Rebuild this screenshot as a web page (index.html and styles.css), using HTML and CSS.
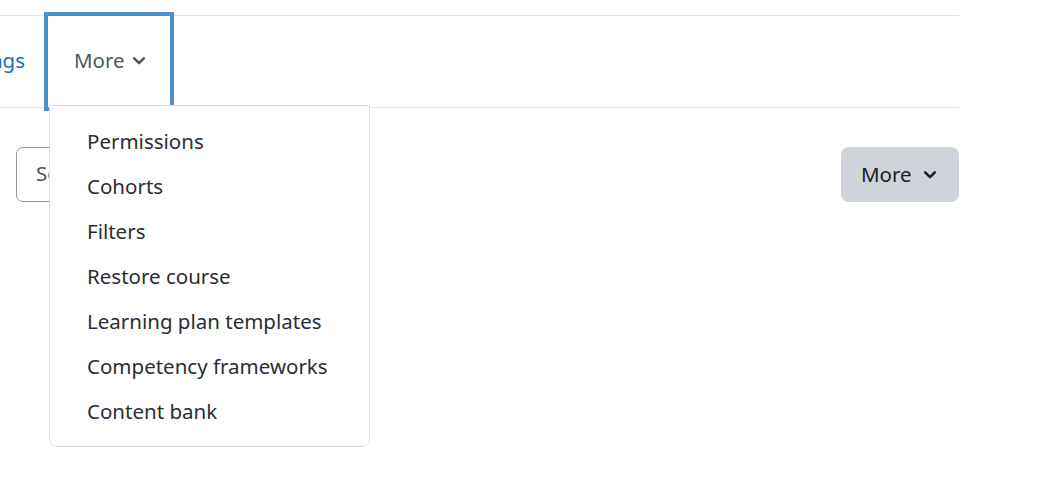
FILE: index.html
```html
<!DOCTYPE html>
<html lang="en">
<head>
<meta charset="utf-8">
<title>Course navigation</title>
<link rel="stylesheet" href="styles.css">
</head>
<body>
<div class="page">
  <nav class="secnav">
    <div class="clip">
      <a class="navlink" href="#">Settings</a>
    </div>
    <div class="navitem">
      <button class="tab focused" type="button">More
        <svg class="chev" viewBox="0 0 16 16" width="14" height="14"><path d="M2.5 5 L8 10.5 L13.5 5" fill="none" stroke="currentColor" stroke-width="3" stroke-linecap="round" stroke-linejoin="round"/></svg>
      </button>
      <ul class="menu">
        <li>Permissions</li>
        <li>Cohorts</li>
        <li>Filters</li>
        <li>Restore course</li>
        <li>Learning plan templates</li>
        <li>Competency frameworks</li>
        <li>Content bank</li>
      </ul>
    </div>
  </nav>
  <div class="toolbar">
    <div class="search">Search courses</div>
    <button class="morebtn" type="button">More
      <svg class="chev" viewBox="0 0 16 16" width="14" height="14"><path d="M2.5 5 L8 10.5 L13.5 5" fill="none" stroke="currentColor" stroke-width="3" stroke-linecap="round" stroke-linejoin="round"/></svg>
    </button>
  </div>
</div>
</body>
</html>
```
FILE: styles.css
```css
* { box-sizing: border-box; }
html, body { min-height: 496px; }
body {
  margin: 0;
  background: #fff;
  font-family: "Noto Sans", "Open Sans", sans-serif;
  font-size: 20.5px;
  color: #2a2e33;
}
.page {
  width: 959px;
  min-height: 496px;
  padding-top: 15px;
}
.secnav {
  display: flex;
  height: 93px;
  border-top: 1px solid #e3e5e8;
  border-bottom: 1px solid #e3e5e8;
}
.clip {
  width: 48px;
  overflow: hidden;
  display: flex;
  justify-content: flex-end;
  align-items: center;
  padding-bottom: 4px;
}
.navlink {
  flex-shrink: 0;
  white-space: nowrap;
  color: #1a6fc0;
  text-decoration: none;
  padding-right: 23px;
}
.navitem {
  position: relative;
}
.tab {
  width: 122px;
  height: 91px;
  border: 0;
  background: #fff;
  font: inherit;
  color: #4e5862;
  display: flex;
  align-items: center;
  padding: 0 0 4px 26px;
  gap: 7px;
}
.tab.focused {
  outline: 4px solid #4d90d2;
  outline-offset: 0;
}
.chev { display: block; margin-top: 2px; }
.menu {
  position: absolute;
  top: 89px;
  left: 1px;
  z-index: 2;
  width: 321px;
  margin: 0;
  padding: 13px 0 12px;
  list-style: none;
  background: #fff;
  border: 1px solid #dcdfe2;
  border-radius: 0 0 8px 8px;
}
.menu li {
  height: 45px;
  line-height: 45px;
  padding-left: 37px;
  color: #2a2e33;
  white-space: nowrap;
}
.toolbar {
  display: flex;
  justify-content: space-between;
  align-items: center;
  margin-top: 39px;
  padding-left: 16px;
}
.search {
  width: 300px;
  height: 55px;
  line-height: 51px;
  border: 1px solid #8f959e;
  border-radius: 7px;
  padding-left: 19px;
  color: #495057;
}
.morebtn {
  height: 55px;
  width: 118px;
  border: 0;
  border-radius: 8px;
  background: #ced4da;
  font: inherit;
  color: #1d2125;
  display: flex;
  align-items: center;
  padding: 0 0 2px 20px;
  gap: 11px;
}
```
